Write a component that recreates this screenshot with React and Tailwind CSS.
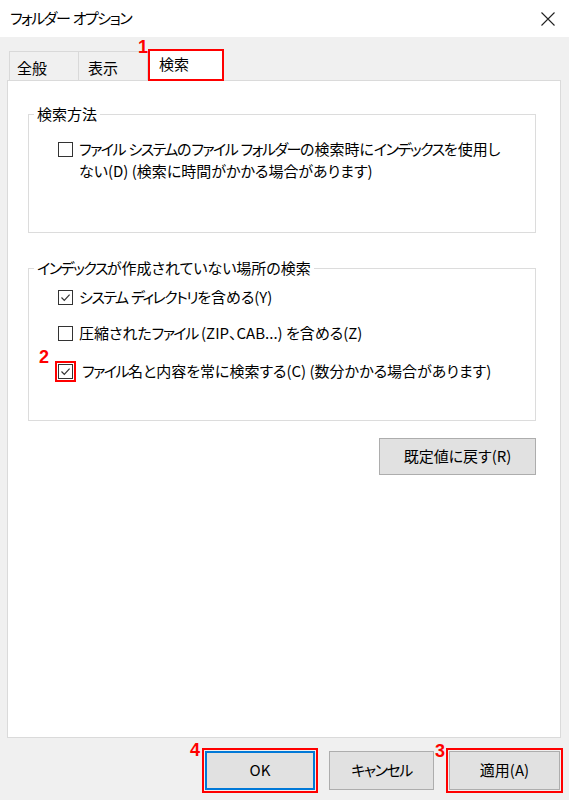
import React from "react";

const font = { fontFamily: '"Noto Sans CJK JP", "Noto Sans", sans-serif' };

// Narrow katakana like Windows UI fonts
function T({ children }) {
  const text = String(children);
  const parts = [];
  let buf = "";
  let kana = null;
  const isK = (c) => /[\u30A0-\u30FF]/.test(c);
  for (const c of text) {
    const k = isK(c);
    if (kana === null) kana = k;
    if (k !== kana) {
      parts.push({ k: kana, s: buf });
      buf = "";
      kana = k;
    }
    buf += c;
  }
  if (buf) parts.push({ k: kana, s: buf });
  return (
    <>
      {parts.map((p, i) =>
        p.k ? (
          <span key={i} className="tracking-[-1.5px]">{p.s}</span>
        ) : (
          <span key={i}>{p.s}</span>
        )
      )}
    </>
  );
}

function Check({ checked }) {
  return (
    <span className="flex h-[15px] w-[15px] shrink-0 items-center justify-center border border-[#333333] bg-white">
      {checked && (
        <svg width="11" height="11" viewBox="0 0 11 11">
          <path d="M1.5 5.5 L4.3 8.3 L9.6 2.6" fill="none" stroke="#333" strokeWidth="1.2" />
        </svg>
      )}
    </span>
  );
}

const num = { fontFamily: '"Liberation Sans", sans-serif' };

export default function App() {
  return (
    <div
      className="relative flex h-[800px] w-[569px] flex-col overflow-hidden bg-[#f0f0f0] text-[15px] text-black [font-feature-settings:'palt']"
      style={font}
    >
      {/* title bar */}
      <div className="flex h-[37px] shrink-0 items-center justify-between bg-white pl-[10px] pr-[14px]">
        <span className="text-[15px] text-black"><T>フォルダー オプション</T></span>
        <svg width="14" height="14" viewBox="0 0 14 14">
          <path d="M0.5 0.5 L13.5 13.5 M13.5 0.5 L0.5 13.5" stroke="#222" strokeWidth="1.1" />
        </svg>
      </div>

      {/* tabs */}
      <div className="ml-[9px] mt-[12px] flex h-[31px] items-end">
        <div className="flex h-[29px] w-[70px] items-center border border-b-0 border-[#d9d9d9] pl-[7px] pt-[5px]">全般</div>
        <div className="flex h-[29px] w-[69px] items-center border border-b-0 border-l-0 border-[#d9d9d9] pl-[9px] pt-[5px]">表示</div>
        <div className="relative z-10 -mb-[1px] flex h-[32px] w-[76px] items-center border-2 border-[#ff0000] bg-white pl-[9px] pb-[1px]">
          検索
          <span className="absolute -left-[12px] -top-[17px] text-[18px] font-bold text-[#ff0000]" style={num}>1</span>
        </div>
      </div>

      {/* panel */}
      <div className="ml-[7px] mr-[8px] flex h-[658px] flex-col border border-[#dadada] bg-white pl-[20px] pr-[24px]">
        <fieldset className="mt-[23px] h-[129px] border border-[#dcdcdc] pt-[14px]">
          <legend className="ml-[5px] px-[3px] leading-[20px]">検索方法</legend>
          <div className="flex items-start gap-[6px] pl-[29px]">
            <div className="mt-[4px]"><Check /></div>
            <div className="leading-[22px]">
              <T>ファイル システムのファイル フォルダーの検索時にインデックスを使用し</T>
              <br />
              ない(D) (検索に時間がかかる場合があります)
            </div>
          </div>
        </fieldset>

        <fieldset className="mt-[25px] h-[163px] border border-[#dcdcdc] pt-[8px]">
          <legend className="ml-[5px] px-[3px] leading-[20px]"><T>インデックスが作成されていない場所の検索</T></legend>
          <div className="flex flex-col gap-[14px] pl-[29px]">
            <div className="flex h-[22px] items-center gap-[6px]">
              <Check checked />
              <span><T>システム ディレクトリを含める(Y)</T></span>
            </div>
            <div className="flex h-[22px] items-center gap-[6px]">
              <Check />
              <span><T>圧縮されたファイル (ZIP、CAB...) を含める(Z)</T></span>
            </div>
            <div className="relative mt-[2px] flex h-[22px] items-center gap-[6px]">
              <div className="-m-[3px] border-2 border-[#ff0000] p-[1px]">
                <Check checked />
              </div>
              <span className="ml-[3px]"><T>ファイル名と内容を常に検索する(C) (数分かかる場合があります)</T></span>
              <span className="absolute -left-[19px] -top-[16px] text-[18px] font-bold text-[#ff0000]" style={num}>2</span>
            </div>
          </div>
        </fieldset>

        <div className="mt-[17px] flex justify-end">
          <button className="h-[37px] w-[157px] border border-[#adadad] bg-[#e1e1e1] text-[15px]">既定値に戻す(R)</button>
        </div>
      </div>

      {/* bottom buttons */}
      <div className="mt-[10px] flex justify-end pr-[6px]">
        <div className="relative border-2 border-[#ff0000] p-[1px]">
          <button className="h-[39px] w-[110px] border-2 border-[#0078d7] bg-[#e1e1e1] text-[15px]">OK</button>
          <span className="absolute -left-[14px] -top-[13px] text-[18px] font-bold text-[#ff0000]" style={num}>4</span>
        </div>
        <div className="ml-[11px] mt-[3px]">
          <button className="h-[39px] w-[105px] border border-[#adadad] bg-[#e1e1e1] text-[15px]"><T>キャンセル</T></button>
        </div>
        <div className="relative ml-[12px] border-2 border-[#ff0000] p-[1px]">
          <button className="h-[39px] w-[111px] border border-[#adadad] bg-[#e1e1e1] text-[15px]">適用(A)</button>
          <span className="absolute -left-[13px] -top-[12px] text-[18px] font-bold text-[#ff0000]" style={num}>3</span>
        </div>
      </div>
    </div>
  );
}
